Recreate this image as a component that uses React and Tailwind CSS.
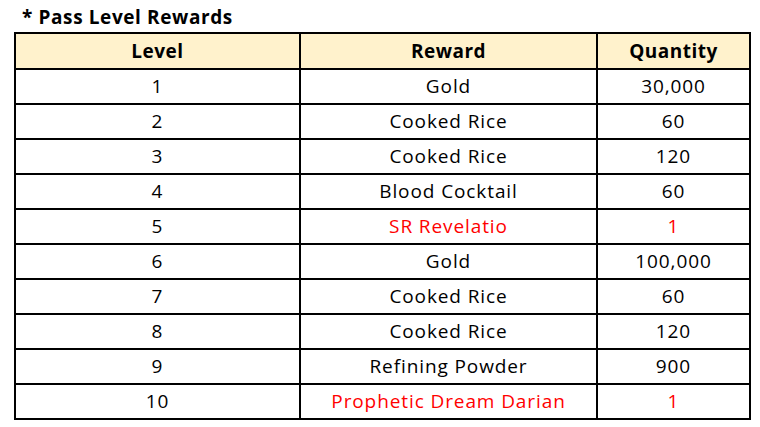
import React from "react";

const rows = [
  ["1", "Gold", "30,000", false],
  ["2", "Cooked Rice", "60", false],
  ["3", "Cooked Rice", "120", false],
  ["4", "Blood Cocktail", "60", false],
  ["5", "SR Revelatio", "1", true],
  ["6", "Gold", "100,000", false],
  ["7", "Cooked Rice", "60", false],
  ["8", "Cooked Rice", "120", false],
  ["9", "Refining Powder", "900", false],
  ["10", "Prophetic Dream Darian", "1", true],
];

export default function App() {
  return (
    <div className="w-[760px] h-[427px] bg-white text-black font-['Open_Sans',sans-serif] pt-[3px] pl-[14px]">
      <div className="pl-[8px] text-[19px] font-bold leading-[29px] tracking-[0.6px]">* Pass Level Rewards</div>
      <table className="table-fixed border-collapse w-[735px]">
        <colgroup>
          <col className="w-[285px]" />
          <col className="w-[297px]" />
          <col className="w-[153px]" />
        </colgroup>
        <thead>
          <tr className="bg-[#fff2cc] h-[36px]">
            <th className="border-2 border-black text-[19px] font-bold tracking-[0.5px] p-0">Level</th>
            <th className="border-2 border-black text-[19px] font-bold tracking-[0.5px] p-0">Reward</th>
            <th className="border-2 border-black text-[19px] font-bold tracking-[0.5px] p-0">Quantity</th>
          </tr>
        </thead>
        <tbody>
          {rows.map(([lv, rw, q, red]) => (
            <tr key={lv} className="h-[35px]">
              <td className="border-2 border-black text-center text-[19px] tracking-[0.9px] p-0">{lv}</td>
              <td className={`border-2 border-black text-center text-[19px] tracking-[0.9px] p-0 ${red ? "text-[#ff0000]" : ""}`}>{rw}</td>
              <td className={`border-2 border-black text-center text-[19px] tracking-[0.9px] p-0 ${red ? "text-[#ff0000]" : ""}`}>{q}</td>
            </tr>
          ))}
        </tbody>
      </table>
    </div>
  );
}
